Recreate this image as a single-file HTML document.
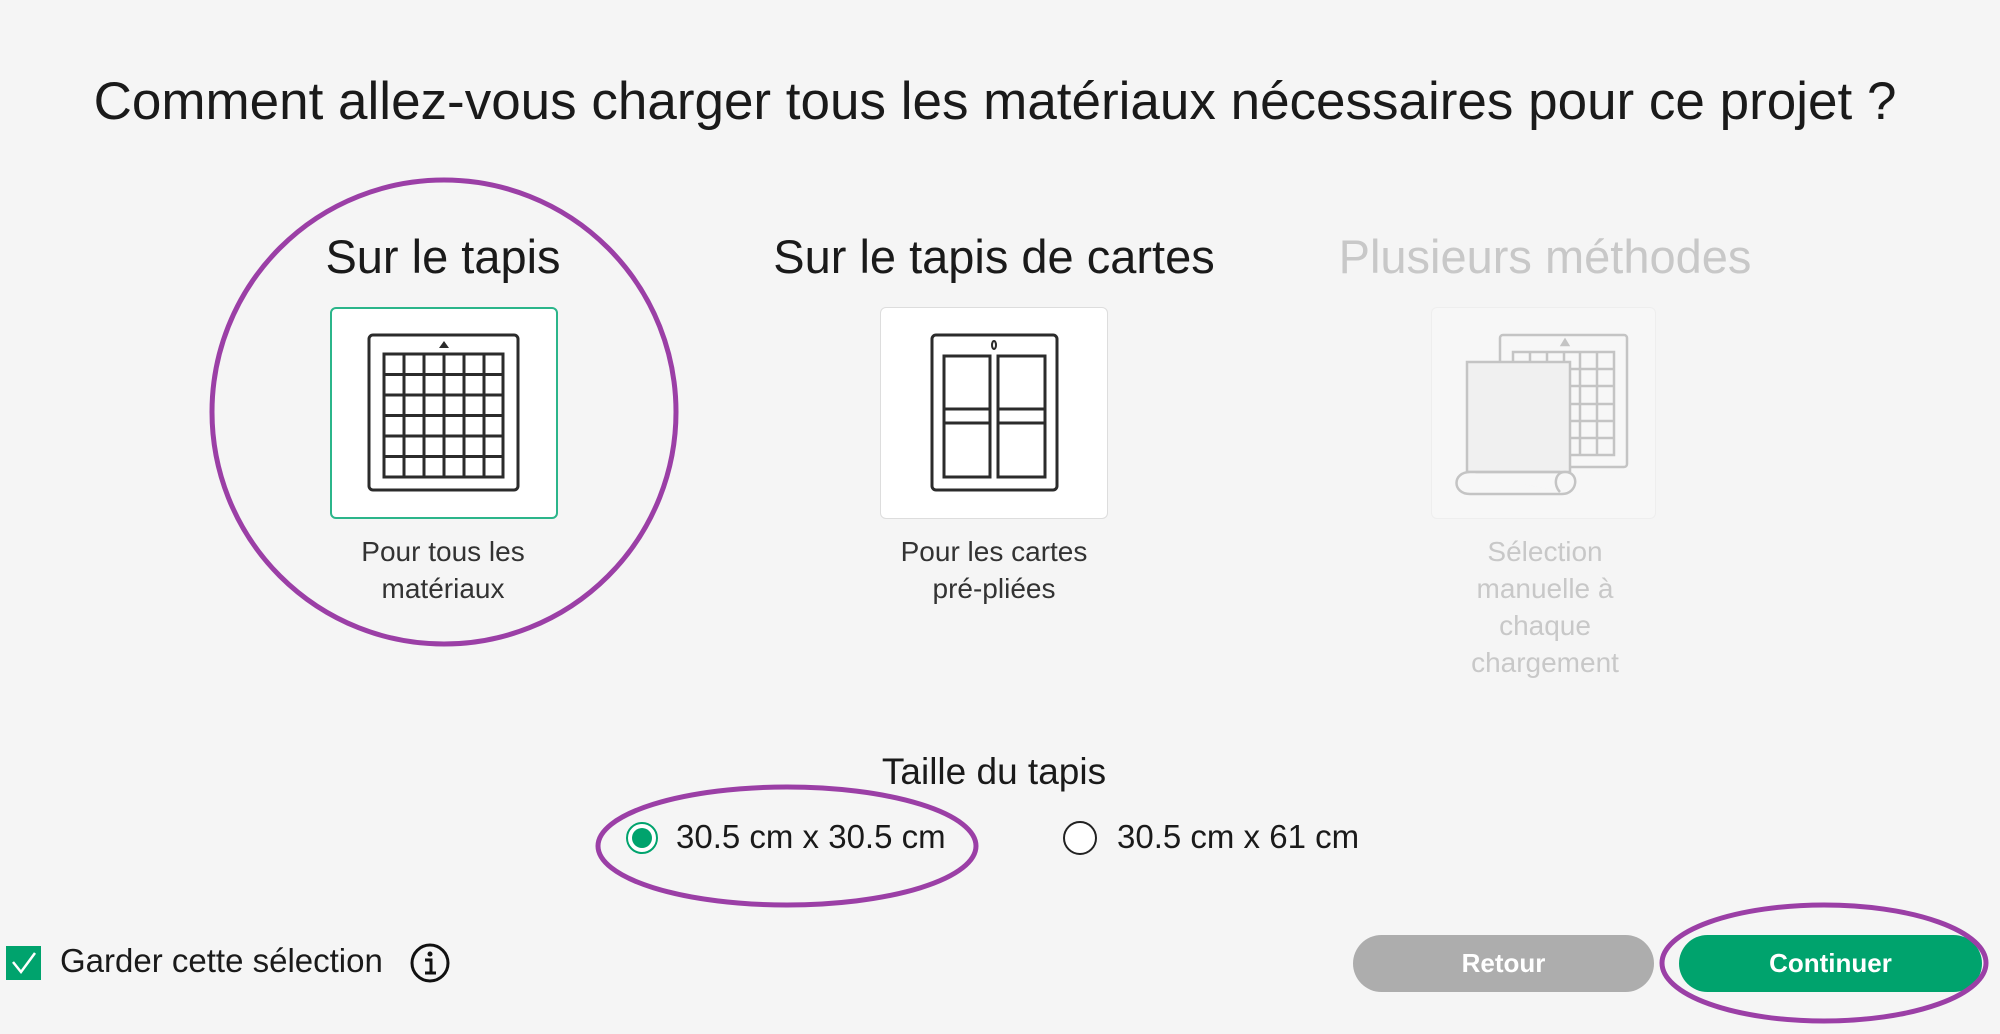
<!DOCTYPE html>
<html><head><meta charset="utf-8"><style>
body{margin:0;width:2000px;height:1034px;background:#f5f5f5;font-family:"Liberation Sans",sans-serif;position:relative;overflow:hidden;color:#1a1a1a}
.t{position:absolute;white-space:nowrap}
.c{transform:translateX(-50%);text-align:center}
.card{position:absolute;background:#fff;border-radius:6px;box-sizing:border-box}
.btn{position:absolute;border-radius:29px;color:#fff;font-size:26px;font-weight:bold;text-align:center;line-height:57px}
</style></head><body>
<div class="t c" style="left:995px;top:71px;font-size:53px">Comment allez-vous charger tous les matériaux nécessaires pour ce projet ?</div>
<div class="t c" style="left:443px;top:229px;font-size:47px">Sur le tapis</div>
<div class="t c" style="left:994px;top:229px;font-size:47px">Sur le tapis de cartes</div>
<div class="t c" style="left:1545px;top:229px;font-size:47px;color:#c8c8c8">Plusieurs méthodes</div>
<div class="card" style="left:330px;top:307px;width:228px;height:212px;border:2px solid #2bb58a"></div>
<div class="card" style="left:880px;top:307px;width:228px;height:212px;border:1px solid #ddd"></div>
<div class="card" style="left:1431px;top:307px;width:225px;height:212px;background:#f7f7f7;border:1px solid #eee"></div>
<div class="t c" style="left:443px;top:533px;font-size:28px;line-height:37px;color:#333">Pour tous les<br>matériaux</div>
<div class="t c" style="left:994px;top:533px;font-size:28px;line-height:37px;color:#333">Pour les cartes<br>pré-pliées</div>
<div class="t c" style="left:1545px;top:533px;font-size:28px;line-height:37px;color:#c8c8c8">Sélection<br>manuelle à<br>chaque<br>chargement</div>
<div class="t c" style="left:994px;top:751px;font-size:37px">Taille du tapis</div>
<div class="t" style="left:676px;top:818px;font-size:33px">30.5 cm x 30.5 cm</div>
<div class="t" style="left:1117px;top:818px;font-size:33px">30.5 cm x 61 cm</div>
<div class="t" style="left:60px;top:942px;font-size:33px">Garder cette sélection</div>
<div class="btn" style="left:1353px;top:935px;width:301px;background:#adadad">Retour</div>
<div class="btn" style="left:1679px;top:935px;width:303px;background:#00a36d">Continuer</div>
<svg style="position:absolute;left:0;top:0" width="2000" height="1034">
<g fill="none" stroke="#2b2b2b" stroke-width="3">
<rect x="369" y="335" width="149" height="155" rx="4"/>
<rect x="384" y="354" width="119" height="123"/>
<path d="M404 354V477M424 354V477M444 354V477M464 354V477M484 354V477M384 374.5H503M384 395H503M384 415.5H503M384 436H503M384 456.5H503"/>
<rect x="932" y="335" width="125" height="155" rx="4"/>
<rect x="944" y="356" width="46" height="121"/><rect x="998" y="356" width="47" height="121"/>
<path d="M944 409H990M944 423H990M998 409H1045M998 423H1045"/>
<ellipse cx="994" cy="345" rx="2" ry="4" stroke-width="2"/>
</g>
<path d="M439 348L444 341L449 348Z" fill="#2b2b2b"/>
<g fill="none" stroke="#c4c4c4" stroke-width="2.5">
<rect x="1500" y="335" width="127" height="132" rx="3"/>
<rect x="1513" y="352" width="101" height="103"/>
<path d="M1530 352V455M1547 352V455M1564 352V455M1580 352V455M1597 352V455M1513 369H1614M1513 386H1614M1513 404H1614M1513 421H1614M1513 438H1614"/>
<path d="M1562 345L1565 340L1568 345Z" fill="#c4c4c4"/>
<path d="M1467 362H1570V472H1467Z" fill="#f0f0f0"/>
<path d="M1467 472H1560M1470 472C1452 472 1452 494 1470 494H1562C1578 494 1580 472 1565 472C1555 472 1553 485 1560 492" fill="#f7f7f7"/>
</g>
<g fill="none" stroke="#9b3fa6" stroke-width="5">
<ellipse cx="444" cy="412" rx="232" ry="232"/>
<ellipse cx="787" cy="846" rx="189" ry="59"/>
<ellipse cx="1824" cy="963" rx="162" ry="58"/>
</g>
<circle cx="642" cy="838" r="15" fill="#fff" stroke="#00a36d" stroke-width="2"/>
<circle cx="642" cy="838" r="10" fill="#00a36d"/>
<circle cx="1080" cy="838" r="16" fill="#fff" stroke="#222" stroke-width="2"/>
<rect x="6" y="946" width="35" height="34" fill="#00a36d"/>
<path d="M13 962L21 972L35 953" fill="none" stroke="#fff" stroke-width="2.5"/>
<circle cx="430" cy="963" r="18" fill="none" stroke="#111" stroke-width="3"/>
<circle cx="430" cy="954" r="2.5" fill="#111"/>
<path d="M425 960H431V973M425 973H436" fill="none" stroke="#111" stroke-width="3"/>
</svg>
</body></html>
